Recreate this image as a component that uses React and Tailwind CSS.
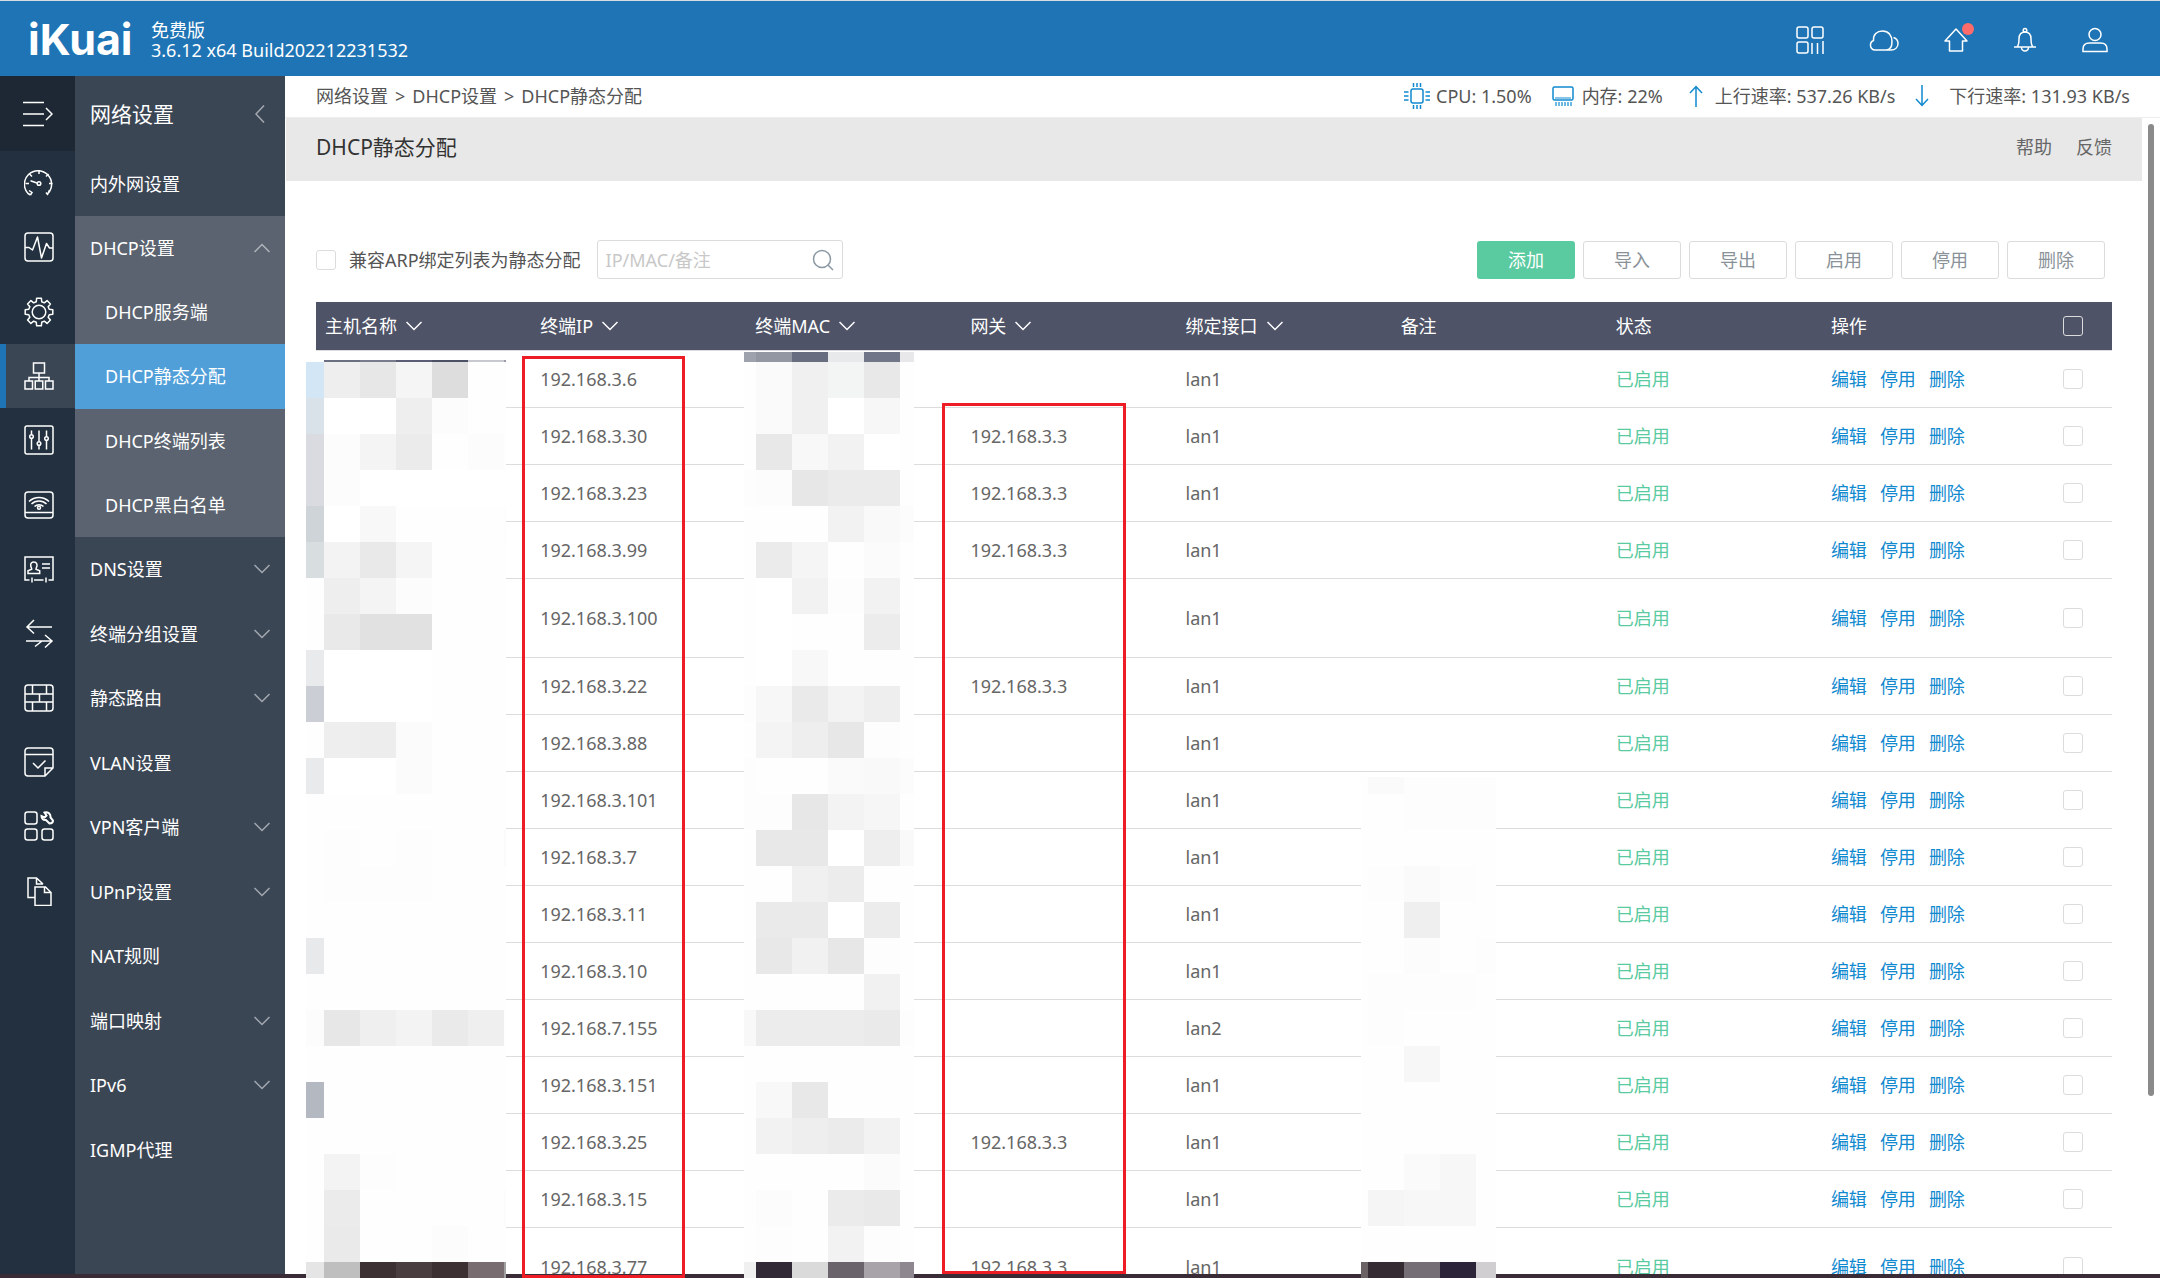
import React from "react";

const Svg = ({ w = 30, h = 30, sw = 1.5, className = "", children }) => (
  <svg
    width={w}
    height={h}
    viewBox={`0 0 ${w} ${h}`}
    fill="none"
    stroke="currentColor"
    strokeWidth={sw}
    className={`shrink-0 ${className}`}
    aria-hidden="true"
  >
    {children}
  </svg>
);

const Chevron = ({ up = false, className = "" }) => (
  <Svg w={16} h={10} className={className}>
    <path d={up ? "M0.5 9 8 1.5 15.5 9" : "M0.5 1 8 8.5 15.5 1"} />
  </Svg>
);

const GearIcon = () => {
  const pts = [];
  const n = 8;
  for (let i = 0; i < n; i++) {
    const c = (i * 2 * Math.PI) / n - Math.PI / 2;
    [[-0.26, 10.6], [-0.17, 14], [0.17, 14], [0.26, 10.6]].forEach(([a, r]) =>
      pts.push(`${(15 + r * Math.cos(c + a)).toFixed(2)} ${(15 + r * Math.sin(c + a)).toFixed(2)}`)
    );
  }
  return (
    <Svg>
      <path d={`M${pts.join("L")}Z`} strokeLinejoin="round" />
      <circle cx="15" cy="15" r="6.8" />
    </Svg>
  );
};

const railItems = [
  ["系统概况", <Svg><path d="M6.5 27 8 24.5 5 22.5M4 25.5A13.6 13.6 0 1 1 24 25.5M24 25.5 25.5 22M6.5 27 4 25.5M22 24.5 24 27" /><path d="M15 2v4M5.5 6l2.5 2.5M24.5 6 22 8.5M1.5 15.5H5M25 15.5h3.5" /><circle cx="15" cy="15.5" r="1.8" /><path d="M13 15 6.5 12.8" /></Svg>],
  ["状态监控", <Svg><rect x="1" y="1" width="28" height="28" rx="3" /><path d="M1 15.500h4l3.500 2.500L13.500 5l4 21 5-14.500 3 4.500H29" strokeLinejoin="round" /></Svg>],
  ["系统设置", <GearIcon />],
  ["网络设置", <Svg><rect x="9.500" y="2" width="11" height="10" /><path d="M15 12v8M5 20v-3.500h20V20" /><rect x="1" y="20" width="7.500" height="8" /><rect x="11.250" y="20" width="7.500" height="8" /><rect x="21.500" y="20" width="7.500" height="8" /></Svg>],
  ["流控分流", <Svg><rect x="1" y="1" width="28" height="28" rx="2" /><path d="M7.500 5.500v4M7.500 13.500v11M15 5.500v11M15 20.500v4M22.500 5.500v6M22.500 15.500v9" /><circle cx="7.500" cy="11.500" r="1.800" /><circle cx="15" cy="18.500" r="1.800" /><circle cx="22.500" cy="13.500" r="1.800" /></Svg>],
  ["AP管理", <Svg><rect x="1" y="2" width="28" height="26" rx="3" /><path d="M1 22.500h28M5 11.500a14.500 14.500 0 0 1 20 0M7.500 14a10.800 10.800 0 0 1 15 0M10.500 16.500a6.500 6.500 0 0 1 9 0" /><circle cx="15" cy="17.800" r="1.500" /></Svg>],
  ["认证计费", <Svg><path d="M5.500 26H1V3h28v23h-4.500M10 26h9.500M8 23.500v5M22 23.500v5" /><path d="M10 8a3 3 0 0 1 3 3.200c0 1.800-1 2.500-1 4l3.700 1.500v2.800H4v-2.800l3.700-1.500c0-1.500-1-2.200-1-4A3 3 0 0 1 10 8ZM18 10h8M18 14h8" /></Svg>],
  ["行为管控", <Svg><path d="M28 9H3M10 2 3 9l7 6.500M2 23h26M21 17l7 6-7 6.500M11 28.500l7-5.500" /></Svg>],
  ["安全设置", <Svg><rect x="1" y="2" width="28" height="26" rx="3" /><path d="M1 11h28M1 19h28M8.500 2v9M22.500 2v9M15.500 11v8M8.500 19v9M22.500 19v9" /></Svg>],
  ["日志中心", <Svg><path d="M4 1h22a3 3 0 0 1 3 3v17l-8 8H4a3 3 0 0 1-3-3V4a3 3 0 0 1 3-3ZM1 7.500h28M21 29v-8h8M9 16l5 5 7.500-7.500" /></Svg>],
  ["高级应用", <Svg><rect x="1" y="1" width="12" height="12" rx="2.500" /><rect x="1" y="18" width="12" height="11" rx="2.500" /><rect x="18" y="18" width="11" height="11" rx="2.500" /><path d="M20.500 1.500c3-1 6.500 1 6 5l2.500 3c0 2-1.500 3-3.500 3L22 9c-2.500.500-4.500-1-4.500-4l3 1.500 2-2Z" strokeWidth="2" /></Svg>],
  ["系统日志", <Svg><path d="M11 21.500H4V2h8.500l6.500 6M12.500 2v6H19" /><path d="M11 11h10.500l5.500 5.500v13H11ZM20.500 11v5.500H27" /></Svg>],
];

const dhcpItems = ["DHCP服务端", "DHCP静态分配", "DHCP终端列表", "DHCP黑白名单"];

const menuItems = [
  ["DNS设置", true],
  ["终端分组设置", true],
  ["静态路由", true],
  ["VLAN设置", false],
  ["VPN客户端", true],
  ["UPnP设置", true],
  ["NAT规则", false],
  ["端口映射", true],
  ["IPv6", true],
  ["IGMP代理", false],
];

const columns = [
  ["主机名称", true],
  ["终端IP", true],
  ["终端MAC", true],
  ["网关", true],
  ["绑定接口", true],
  ["备注", false],
  ["状态", false],
  ["操作", false],
];

const rows = [
  { ip: "192.168.3.6", gw: "", lan: "lan1" },
  { ip: "192.168.3.30", gw: "192.168.3.3", lan: "lan1" },
  { ip: "192.168.3.23", gw: "192.168.3.3", lan: "lan1" },
  { ip: "192.168.3.99", gw: "192.168.3.3", lan: "lan1" },
  { ip: "192.168.3.100", gw: "", lan: "lan1", tall: true },
  { ip: "192.168.3.22", gw: "192.168.3.3", lan: "lan1" },
  { ip: "192.168.3.88", gw: "", lan: "lan1" },
  { ip: "192.168.3.101", gw: "", lan: "lan1" },
  { ip: "192.168.3.7", gw: "", lan: "lan1" },
  { ip: "192.168.3.11", gw: "", lan: "lan1" },
  { ip: "192.168.3.10", gw: "", lan: "lan1" },
  { ip: "192.168.7.155", gw: "", lan: "lan2" },
  { ip: "192.168.3.151", gw: "", lan: "lan1" },
  { ip: "192.168.3.25", gw: "192.168.3.3", lan: "lan1" },
  { ip: "192.168.3.15", gw: "", lan: "lan1" },
  { ip: "192.168.3.77", gw: "192.168.3.3", lan: "lan1", tall: true },
];

/* Pixelated privacy masks: one string per row, two-digit values are greys. */
const hostMask = [
  "ff 6b6f82 797c8c 5a5d73 4d5166 c8c9d0 9a9ca8",
  "d3e6f5 ee e7 f5 dd fe fe",
  "d9e1e9 ff ff ee fc fe fe",
  "dadbe0 fc f4 eb fe fc fe",
  "dadbe0 fc ff ff ff ff ff",
  "cfd4d8 ff f8 fe fe fe fd",
  "d8dde0 f3 e9 f5 fe fe fe",
  "fe ee f4 fc fe fe fe",
  "fe e9 e1 e1 fe fe fe",
  "e9eaec ff ff ff fe fe fe",
  "cbced4 ff ff ff fe fe fe",
  "fe ee ed fb fe fe fe",
  "e9eaec ff ff fb fe fe fe",
  "fe fe fe fe fe fe fe",
  "fe fd fe fd fe fe fa",
  "fe fd fd fd fe fe fe",
  "fe fe fe fe fe fe fe",
  "e8e9eb fe fe fe fe fe fe",
  "fe fe fe fe fe fe fe",
  "fc e7 ef f3 ea ef fe",
  "fe fe fe fe fe fe fe",
  "b4b8c1 fe fe fe fe fe fe",
  "fe fe fe fe fe fe fe",
  "fe f3 fd fe fe fe fe",
  "fe eb fe fe fe fe fc",
  "fe ea fe fe fc fe fe",
  "e5 bf 3d3033 493d40 3d3033 786c70 a0",
];

const macMask = [
  "9ea2ad 9297a2 686d80 e8e9eb 707588 e8e8ea",
  "fe fa f0 f3f5f4 e8 fe",
  "fe fa f0 ff f7 fe",
  "fe e8 f8 f2 ff fe",
  "fd fc e7 eb eb fe",
  "fe fe fe f2 f9 fc",
  "fe eb f5 fe fb fe",
  "fe ff f2 fd f2 fe",
  "fe ff fe fe ec fe",
  "fe ff f8 fe fe fe",
  "fd f7 ea f3 ee fe",
  "fe f4 ee e7 fd fe",
  "fd fe fe fa f9 fc",
  "fd fd e7 f3 f6 fe",
  "fe e8 e8 ff ee f9",
  "fe fe f0 ec fe fe",
  "fe ea ea ff ec fe",
  "fe e8 f1 e7 fd fe",
  "fe fe fe fe f1 fe",
  "f8 ec ec ec ea fd",
  "fe fe fe fe fe fe",
  "fe f8 e8 fe fe fe",
  "fe f2 ee eb f2 fe",
  "fe fe fe fe fb fe",
  "fe fc fe eb e9 fe",
  "fe fd fe f2 fd fe",
  "f0 322937 dadadb 6a636c a8a3a9 8f878f",
];

const noteMask = [
  "fe fa fd fd fd",
  "fe fe fd fd fd",
  "fe fe fe fe fe",
  "fe fd fa fd fe",
  "fe fe ef fe fe",
  "fe fe fc fe fd",
  "fe fd fd fd fe",
  "fe fd fe fe fe",
  "fe fe f7 fe fe",
  "fe fe fe fe fe",
  "fe fe fe fe fe",
  "fe fe fa f7 fe",
  "fe f5 f7 f7 fe",
  "fe fe fe fe fe",
  "6b6266 352b33 756e76 2c2438 d0ced1",
];

const Mask = ({ data, className }) => (
  <div className={`absolute bottom-0 grid auto-rows-[36px] overflow-hidden ${className}`} aria-hidden="true">
    {data.flatMap((line, r) =>
      line.split(" ").map((c, i) => (
        <div key={`${r}-${i}`} style={{ backgroundColor: `#${c.length === 2 ? c + c + c : c}` }} />
      ))
    )}
  </div>
);

const checkbox = "block h-5 w-5 shrink-0 appearance-none rounded-[3px] border border-[#dcdcdc]";

export default function App() {
  return (
    <div className="relative flex h-screen flex-col overflow-hidden border-t border-[#d5dde2] bg-white font-['Noto_Sans','Noto_Sans_CJK_SC',sans-serif] text-[18px] leading-6 text-[#555]">
      <header className="flex h-[75px] shrink-0 items-center bg-[#1e74b4] pt-0.5 pr-[52px] pl-7 text-white">
        <div className="w-[108px] font-['Inter','Liberation_Sans',sans-serif] text-[43px] leading-none font-bold">iKuai</div>
        <div className="ml-[15px] leading-5">
          <p>免费版</p>
          <p>3.6.12 x64 Build202212231532</p>
        </div>
        <nav className="ml-auto flex items-center gap-[45px]">
          <button aria-label="应用">
            <Svg w={28} h={28}><rect x="1" y="1" width="11" height="11" rx="2" /><rect x="16" y="1" width="11" height="11" rx="2" /><rect x="1" y="16" width="11" height="11" rx="2" /><path d="M16 17v11M21.500 17v11M27 15v13" /></Svg>
          </button>
          <button aria-label="云">
            <Svg w={30} h={24}><path d="M5.500 22A5 5 0 0 1 4.500 12.500C4 6.500 8 3 13.500 3c6 0 9.500 4.500 9.500 10.500 0 5-2 8.500-6 8.500ZM24.500 9.500c3 1 4.500 3.500 4.500 6 0 4-3 6.500-7 6.500h-5" /></Svg>
          </button>
          <button aria-label="升级" className="relative">
            <Svg w={24} h={26}><path d="M12 2 1 14h4.500v10h13V14H23Z" strokeLinejoin="round" /></Svg>
            <span className="absolute -top-1 -right-1.5 h-3 w-3 rounded-full bg-[#ff6b6b]" />
          </button>
          <button aria-label="通知">
            <Svg w={24} h={26}><path d="M1 20h22M4 20c2-2 2-4 2-8 0-4 2-7 6-7s6 3 6 7c0 4 0 6 2 8M8.500 20.500a3.500 3.500 0 0 0 7 0" /><circle cx="12" cy="3.200" r="1.800" /></Svg>
          </button>
          <button aria-label="用户">
            <Svg w={26} h={26}><circle cx="13" cy="7.500" r="6" /><path d="M1 24.500V22c0-4 2.500-6 6.500-6h11c4 0 6.500 2 6.500 6v2.500Z" /></Svg>
          </button>
        </nav>
      </header>

      <div className="flex min-h-0 flex-1">
        <nav className="flex w-[75px] shrink-0 flex-col bg-[#22303f] text-white">
          <button aria-label="展开菜单" className="flex h-[75px] items-center bg-[#1e2834] pl-[23px]">
            <Svg><path d="M0 3.500h21M0 15h21M0 26.500h21M23 9l6 6-6 6" /></Svg>
          </button>
          <div className="grid h-[772px] auto-rows-fr">
            {railItems.map(([name, icon]) => (
              <button
                key={name}
                aria-label={name}
                className={
                  name === "网络设置"
                    ? "flex items-center border-l-[6px] border-[#1e74b4] bg-[#3b4655] pl-[18px]"
                    : "flex items-center border-l-[6px] border-transparent pl-[18px]"
                }
              >
                {icon}
              </button>
            ))}
          </div>
        </nav>

        <nav className="w-[210px] shrink-0 bg-[#3b4655] text-white">
          <h2 className="flex h-[75px] items-center justify-between pr-5 pl-[15px] text-[21px]">
            网络设置
            <button aria-label="收起" className="text-[#a3a9b1]">
              <Svg w={10} h={18}><path d="M9 0.500 1 9l8 8.500" /></Svg>
            </button>
          </h2>
          <a href="#lan" className="flex h-[65px] items-center pl-[15px]">内外网设置</a>
          <div className="grid h-[321px] auto-rows-fr bg-[#5a636f]">
            <button className="flex items-center justify-between px-[15px]">
              DHCP设置
              <Chevron up className="text-[#b0b5bb]" />
            </button>
            {dhcpItems.map((t) => (
              <a
                key={t}
                href="#dhcp"
                className={t === "DHCP静态分配" ? "flex items-center bg-[#509fd9] pl-[30px]" : "flex items-center pl-[30px]"}
              >
                {t}
              </a>
            ))}
          </div>
          <div className="grid h-[645px] auto-rows-fr">
            {menuItems.map(([t, sub]) => (
              <button key={t} className="flex items-center justify-between px-[15px]">
                {t}
                {sub && <Chevron className="text-[#a3a9b1]" />}
              </button>
            ))}
          </div>
        </nav>

        <main className="flex min-w-0 flex-1 flex-col">
          <div className="flex h-[42px] shrink-0 items-center border-b border-[#eee] pr-[30px] pb-0.5 pl-[31px]">
            <nav className="flex gap-[7px]">
              <a href="#network">网络设置</a>
              <span>&gt;</span>
              <a href="#dhcp">DHCP设置</a>
              <span>&gt;</span>
              <span>DHCP静态分配</span>
            </nav>
            <div className="ml-auto flex items-center whitespace-nowrap">
              <Svg w={26} h={26} className="mr-1.5 text-[#1089cf]"><rect x="7" y="6" width="12" height="14" rx="2" /><path d="M9.500 0v4M13 0v4M16.500 0v4M9.500 22v4M13 22v4M16.500 22v4M0 9h4.500M0 13h4.500M0 17h4.500M21.500 9H26M21.500 13H26M21.500 17H26" /></Svg>
              <span className="mr-5">CPU: 1.50%</span>
              <Svg w={22} h={22} className="mr-2 text-[#1089cf]"><rect x="1" y="2" width="20" height="13" rx="1.500" /><path d="M3 13h16M4 17v4M7 17v4M10 17v4M13 17v4M16 17v4M19 17v4" strokeWidth="1.200" /></Svg>
              <span className="mr-[26px]">内存: 22%</span>
              <Svg w={14} h={22} className="mr-3 text-[#1089cf]"><path d="M7 22V2M1 8l6-6.500L13 8" /></Svg>
              <span className="mr-5">上行速率: 537.26 KB/s</span>
              <Svg w={14} h={22} className="mr-5 text-[#1089cf]"><path d="M7 0v20M1 14l6 6.500 6-6.500" /></Svg>
              <span>下行速率: 131.93 KB/s</span>
            </div>
          </div>

          <div className="flex min-h-0 flex-1">
            <div className="min-w-0 flex-1 overflow-hidden">
              <div className="ml-px flex h-[63px] items-center bg-[#e8e8e8] pr-[30px] pb-1.5 pl-[30px]">
                <h1 className="text-[21px] text-[#333]">DHCP静态分配</h1>
                <div className="ml-auto flex gap-6 text-[#666]">
                  <a href="#help">帮助</a>
                  <a href="#feedback">反馈</a>
                </div>
              </div>

              <div className="pt-[59px] pr-[30px] pl-[31px]">
                <div className="flex items-center pr-[7px]">
                  <label className="flex items-center gap-[13px]">
                    <input type="checkbox" className={checkbox} />
                    兼容ARP绑定列表为静态分配
                  </label>
                  <div className="ml-4 flex h-[39px] w-[246px] items-center rounded-[3px] border border-[#dcdcdc] px-2">
                    <input
                      type="text"
                      aria-label="搜索"
                      placeholder="IP/MAC/备注"
                      className="min-w-0 flex-1 bg-transparent outline-none placeholder:text-[#c8c8c8]"
                    />
                    <button aria-label="查询" className="text-[#8b98a3]">
                      <Svg w={22} h={22}><circle cx="10" cy="10" r="8.500" /><path d="m16 16 5 5" /></Svg>
                    </button>
                  </div>
                  <div className="ml-auto flex gap-2 text-[#8a9299]">
                    <button className="h-[38px] w-[98px] rounded-[3px] bg-[#5acaa0] text-white">添加</button>
                    {["导入", "导出", "启用", "停用", "删除"].map((t) => (
                      <button key={t} className="h-[38px] w-[98px] rounded-[3px] border border-[#dcdcdc]">{t}</button>
                    ))}
                  </div>
                </div>

                <table className="mt-[23px] w-full table-fixed border-collapse text-left text-[#666]">
                  <thead>
                    <tr className="h-12 border-b border-[#dcdcdc] bg-[#4e5367] text-white">
                      {columns.map(([t, sort]) => (
                        <th key={t} scope="col" className="pl-[9px] font-normal">
                          <span className="flex items-center gap-[9px]">
                            {t}
                            {sort && <Chevron />}
                          </span>
                        </th>
                      ))}
                      <th scope="col" className="w-[75px] pl-[26px]">
                        <input type="checkbox" aria-label="全选" className={checkbox} />
                      </th>
                    </tr>
                  </thead>
                  <tbody>
                    {rows.map((r) => (
                      <tr key={r.ip} className={r.tall ? "h-[79px] border-b border-[#dcdcdc]" : "h-[57px] border-b border-[#dcdcdc]"}>
                        <td />
                        <td className="pl-[9px]">{r.ip}</td>
                        <td />
                        <td className="pl-[9px]">{r.gw}</td>
                        <td className="pl-[9px]">{r.lan}</td>
                        <td />
                        <td className="pl-[9px] text-[#5acaa0]">已启用</td>
                        <td className="pl-[9px] text-[#1089cf]">
                          <span className="flex gap-[13px]">
                            <a href="#edit">编辑</a>
                            <a href="#disable">停用</a>
                            <a href="#delete">删除</a>
                          </span>
                        </td>
                        <td className="pl-[26px]">
                          <input type="checkbox" aria-label={`选择 ${r.ip}`} className={checkbox} />
                        </td>
                      </tr>
                    ))}
                  </tbody>
                </table>
              </div>
            </div>
            <div className="w-[18px] shrink-0 pt-[6px] pl-1.5">
              <div className="h-[972px] w-1.5 rounded-full bg-[#8a8a8a]" />
            </div>
          </div>
        </main>
      </div>

      <div className="h-1 shrink-0 bg-[#3a2c36]" />

      <Mask data={hostMask} className="top-[359px] left-[306px] w-[200px] grid-cols-[18px_repeat(5,36px)_2px] grid-rows-[2px]" />
      <Mask data={macMask} className="top-[351px] left-[744px] w-[170px] grid-cols-[12px_repeat(4,36px)_14px] grid-rows-[10px]" />
      <Mask data={noteMask} className="top-[776px] left-[1361px] w-[135px] grid-cols-[7px_repeat(3,36px)_20px] grid-rows-[17px]" />
      <div className="absolute top-[355px] bottom-0 left-[522px] w-[163px] border-3 border-[#ee1c25]" />
      <div className="absolute top-[402px] bottom-1 left-[942px] w-[184px] border-3 border-[#ee1c25]" />
    </div>
  );
}
